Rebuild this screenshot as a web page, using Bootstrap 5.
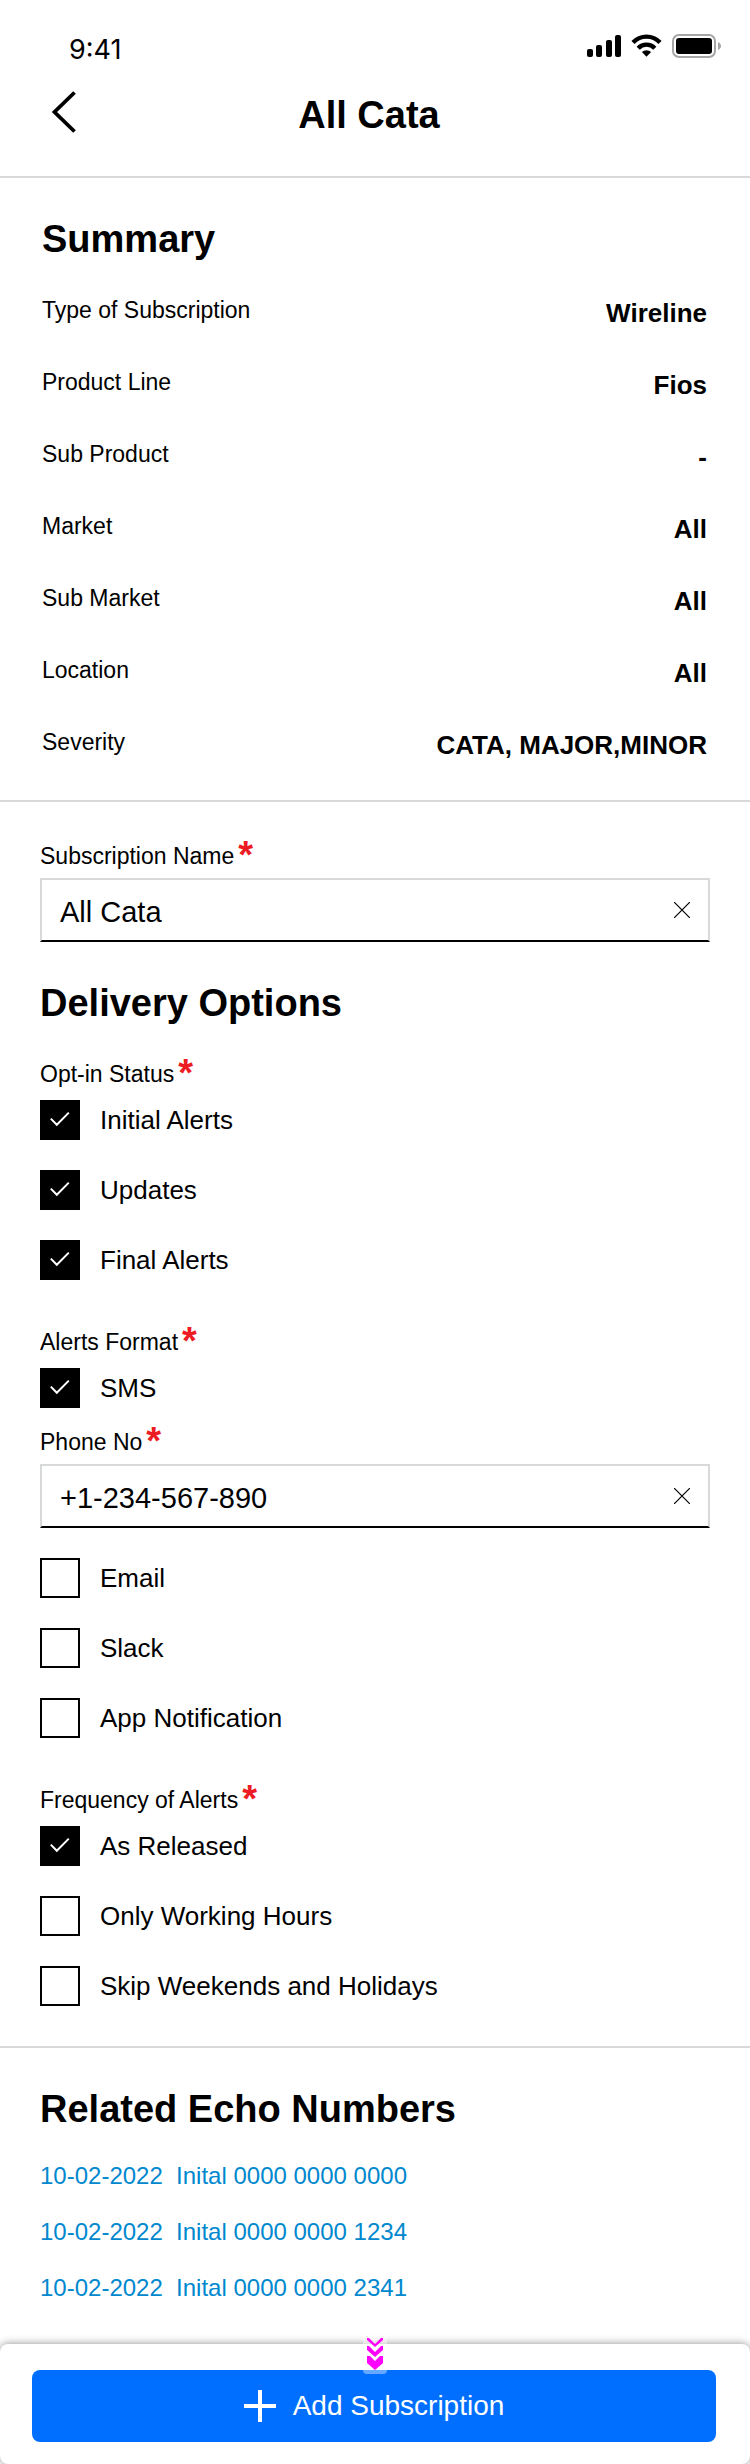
<!DOCTYPE html>
<html lang="en">
<head>
<meta charset="utf-8">
<meta name="viewport" content="width=device-width, initial-scale=1">
<title>All Cata</title>
<link rel="stylesheet" href="https://cdn.jsdelivr.net/npm/bootstrap@5.3.0/dist/css/bootstrap.min.css">
<style>
  body { font-family: "Liberation Sans", Arial, sans-serif; color: #000; background: #fff; }
  .status-bar { padding: 34px 28px 0 69px; }
  .status-time { font: 400 27px/32px Inter, "Liberation Sans", sans-serif; }
  .title-bar { display: grid; grid-template-columns: 1fr auto 1fr; padding: 25px 64px 37px 52px; min-height: 110px; }
  .back-btn { width: 24px; height: 42px; line-height: 0; }
  .section-title { font-size: 38px; line-height: 40px; font-weight: 700; margin: 0; }
  .title-bar .section-title { padding-top: 4px; }
  .rule-below { border-bottom: 2px solid #d8dada; }
  .summary { padding: 41px 43px 19px 42px; }
  .summary-list { padding-top: 18px; }
  .summary-row { min-height: 72px; }
  .summary-row dt { font-size: 23px; line-height: 24px; font-weight: 400; padding-bottom: 6px; }
  .summary-row dd { font-size: 26px; line-height: 32px; font-weight: 700; }
  .form-area { padding: 42px 40px 40px; }
  .field-label { display: block; float: none; width: auto; font-size: 23px; line-height: 24px; margin: 0; padding: 0; }
  .req { color: #ed1c24; font-size: 38px; line-height: 0; font-weight: 700; vertical-align: -4px; margin-left: 4px; }
  .text-box { height: 64px; margin-top: 10px; border: 2px solid #d8dada; border-bottom-color: #000; }
  .text-box .form-control { font-size: 29px; line-height: 32px; color: #000; padding: 4px 0 0 18px; background: transparent; }
  .clear-btn { width: 56px; line-height: 0; }
  .delivery-title { padding: 41px 0 39px; }
  .check-list { display: grid; gap: 30px; }
  .field-label + .check-list { padding-top: 14px; }
  .check-row { min-height: 40px; gap: 20px; font-size: 26px; line-height: 32px; }
  .check-row .form-check-input { width: 40px; height: 40px; margin: 0; border: 2px solid #000; border-radius: 0; flex: none; background-color: #fff; }
  .check-row .form-check-input:checked { background-color: #000; background-size: 40px 40px; background-position: center;
    background-image: url("data:image/svg+xml,%3Csvg xmlns='http://www.w3.org/2000/svg' viewBox='0 0 40 40'%3E%3Cpath fill='none' stroke='%23fff' stroke-width='2' d='M10.800 18.600l6 6.200 12-12.200'/%3E%3C/svg%3E"); }
  .group-gap { margin-top: 50px; }
  .phone-field { padding: 22px 0 30px; }
  .related { padding: 41px 40px 44px; }
  .echo-links { display: grid; gap: 32px; padding-top: 35px; justify-items: start; }
  .echo-links a { font-size: 24px; line-height: 24px; color: #0088ce; text-decoration: none; white-space: pre; }
  .action-bar { padding: 26px 34px 22px 32px; background: #fff; border-radius: 8px; box-shadow: 0 0 8px rgba(0, 0, 0, .45); }
  .add-btn { height: 72px; gap: 17px; font-size: 28px; line-height: 32px; color: #fff; background: #006fff; border: 0; border-radius: 8px; }
  .add-btn:hover { color: #fff; background: #0064e6; }
  .scroll-hint { top: -10px; left: calc(50% - 12px); line-height: 0; pointer-events: none; }
</style>
</head>
<body>
<header class="rule-below">
  <div class="status-bar d-flex justify-content-between align-items-start">
    <span class="status-time">9:41</span>
    <svg width="136" height="24" viewBox="0 0 136 24" aria-hidden="true">
      <rect x="1" y="15" width="6" height="8" rx="2"/>
      <rect x="10" y="11" width="6" height="12" rx="2"/>
      <rect x="20" y="6" width="6" height="17" rx="2"/>
      <rect x="29" y="1" width="6" height="22" rx="2"/>
      <path fill="none" stroke="#000" stroke-width="4.400" d="M47 8.500a18.500 18.500 0 0 1 27 0M52.200 14.200a11.500 11.500 0 0 1 16.600 0"/>
      <path d="M60.500 22.800l-4.600-4.700a6.500 6.500 0 0 1 9.200 0z"/>
      <rect x="87" y="1" width="42" height="22" rx="6" fill="none" stroke="#a6a6a6" stroke-width="2"/>
      <rect x="90" y="4" width="36" height="16" rx="3"/>
      <path fill="#a6a6a6" d="M132 8c4 1.500 4 6.500 0 8z"/>
    </svg>
  </div>
  <div class="title-bar">
    <button type="button" class="back-btn btn p-0 border-0" aria-label="Back">
      <svg width="24" height="42" viewBox="0 0 24 42"><path fill="none" stroke="#000" stroke-width="3.800" d="M22.500 1.500L2.500 21l20 19.500"/></svg>
    </button>
    <h1 class="section-title">All Cata</h1>
  </div>
</header>

<main>
  <section class="summary rule-below">
    <h2 class="section-title">Summary</h2>
    <dl class="summary-list mb-0">
      <div class="summary-row d-flex justify-content-between align-items-center"><dt>Type of Subscription</dt><dd class="mb-0">Wireline</dd></div>
      <div class="summary-row d-flex justify-content-between align-items-center"><dt>Product Line</dt><dd class="mb-0">Fios</dd></div>
      <div class="summary-row d-flex justify-content-between align-items-center"><dt>Sub Product</dt><dd class="mb-0">-</dd></div>
      <div class="summary-row d-flex justify-content-between align-items-center"><dt>Market</dt><dd class="mb-0">All</dd></div>
      <div class="summary-row d-flex justify-content-between align-items-center"><dt>Sub Market</dt><dd class="mb-0">All</dd></div>
      <div class="summary-row d-flex justify-content-between align-items-center"><dt>Location</dt><dd class="mb-0">All</dd></div>
      <div class="summary-row d-flex justify-content-between align-items-center"><dt>Severity</dt><dd class="mb-0">CATA, MAJOR,MINOR</dd></div>
    </dl>
  </section>

  <form id="subscription" class="form-area rule-below">
    <label class="field-label" for="subName">Subscription Name<span class="req">*</span></label>
    <div class="text-box d-flex">
      <input type="text" class="form-control border-0 shadow-none rounded-0" id="subName" value="All Cata">
      <button type="button" class="clear-btn btn p-0 border-0" aria-label="Clear subscription name">
        <svg width="16" height="16" viewBox="0 0 16 16"><path stroke="#000" stroke-width="1.200" d="M0 0l16 16M16 0L0 16"/></svg>
      </button>
    </div>

    <h2 class="section-title delivery-title">Delivery Options</h2>

    <fieldset>
      <legend class="field-label">Opt-in Status<span class="req">*</span></legend>
      <div class="check-list">
        <div class="check-row d-flex align-items-center"><input class="form-check-input" type="checkbox" id="initial" checked><label for="initial">Initial Alerts</label></div>
        <div class="check-row d-flex align-items-center"><input class="form-check-input" type="checkbox" id="updates" checked><label for="updates">Updates</label></div>
        <div class="check-row d-flex align-items-center"><input class="form-check-input" type="checkbox" id="final" checked><label for="final">Final Alerts</label></div>
      </div>
    </fieldset>

    <fieldset class="group-gap">
      <legend class="field-label">Alerts Format<span class="req">*</span></legend>
      <div class="check-list">
        <div class="check-row d-flex align-items-center"><input class="form-check-input" type="checkbox" id="sms" checked><label for="sms">SMS</label></div>
      </div>
      <div class="phone-field">
        <label class="field-label" for="phone">Phone No<span class="req">*</span></label>
        <div class="text-box d-flex">
          <input type="tel" class="form-control border-0 shadow-none rounded-0" id="phone" value="+1-234-567-890">
          <button type="button" class="clear-btn btn p-0 border-0" aria-label="Clear phone number">
            <svg width="16" height="16" viewBox="0 0 16 16"><path stroke="#000" stroke-width="1.200" d="M0 0l16 16M16 0L0 16"/></svg>
          </button>
        </div>
      </div>
      <div class="check-list">
        <div class="check-row d-flex align-items-center"><input class="form-check-input" type="checkbox" id="email"><label for="email">Email</label></div>
        <div class="check-row d-flex align-items-center"><input class="form-check-input" type="checkbox" id="slack"><label for="slack">Slack</label></div>
        <div class="check-row d-flex align-items-center"><input class="form-check-input" type="checkbox" id="appNote"><label for="appNote">App Notification</label></div>
      </div>
    </fieldset>

    <fieldset class="group-gap">
      <legend class="field-label">Frequency of Alerts<span class="req">*</span></legend>
      <div class="check-list">
        <div class="check-row d-flex align-items-center"><input class="form-check-input" type="checkbox" id="released" checked><label for="released">As Released</label></div>
        <div class="check-row d-flex align-items-center"><input class="form-check-input" type="checkbox" id="hours"><label for="hours">Only Working Hours</label></div>
        <div class="check-row d-flex align-items-center"><input class="form-check-input" type="checkbox" id="skip"><label for="skip">Skip Weekends and Holidays</label></div>
      </div>
    </fieldset>
  </form>

  <section class="related">
    <h2 class="section-title">Related Echo Numbers</h2>
    <div class="echo-links">
      <a href="#">10-02-2022  Inital 0000 0000 0000</a>
      <a href="#">10-02-2022  Inital 0000 0000 1234</a>
      <a href="#">10-02-2022  Inital 0000 0000 2341</a>
    </div>
  </section>
</main>

<footer class="action-bar position-relative">
  <button type="submit" form="subscription" class="add-btn btn w-100 d-flex justify-content-center align-items-center">
    <svg width="32" height="32" viewBox="0 0 32 32" aria-hidden="true"><path stroke="#fff" stroke-width="4" d="M16 0v32M0 16h32"/></svg>
    <span>Add Subscription</span>
  </button>
  <div class="scroll-hint position-absolute">
    <svg width="24" height="40" viewBox="0 0 24 40" aria-hidden="true">
      <rect width="24" height="40" rx="4" fill="#fff" fill-opacity=".4"/>
      <g fill="#f0f">
        <path d="M4 4h2l6 6 6-6h2v2l-8 7-8-7z"/>
        <path d="M4 12h2l6 6 6-6h2v4l-8 7-8-7z"/>
        <path d="M4 22h3l5 5 5-5h3v7l-8 7-8-7z"/>
      </g>
    </svg>
  </div>
</footer>
<script src="https://cdn.jsdelivr.net/npm/bootstrap@5.3.0/dist/js/bootstrap.bundle.min.js"></script>
</body>
</html>
